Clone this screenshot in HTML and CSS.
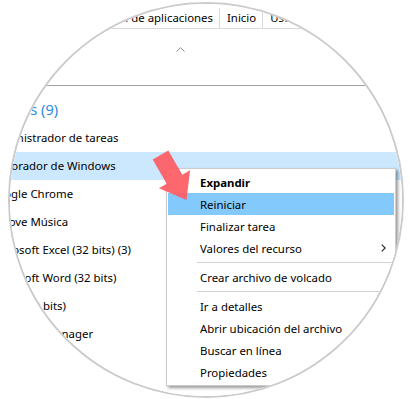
FILE: index.html
```html
<!DOCTYPE html>
<html lang="es">
<head>
<meta charset="utf-8">
<title>Administrador de tareas</title>
<link rel="stylesheet" href="styles.css">
</head>
<body>
<div class="lens">
  <div class="window">
    <div class="tabs">
      <div class="tab tab-first">Historial de aplicaciones</div>
      <div class="tab">Inicio</div>
      <div class="tab">Usuarios</div>
      <div class="tab">Detalles</div>
      <div class="tab">Servicios</div>
    </div>
    <div class="colhead">
      <svg class="sort" width="9" height="5" viewBox="0 0 9 5"><polyline points="0.5,4.5 4.5,0.8 8.5,4.5" fill="none" stroke="#8a8a8a" stroke-width="1"/></svg>
    </div>
    <div class="group">Aplicaciones (9)</div>
    <div class="rows">
      <div class="row">Administrador de tareas</div>
      <div class="row sel">Explorador de Windows</div>
      <div class="row">Google Chrome</div>
      <div class="row">Groove Música</div>
      <div class="row">Microsoft Excel (32 bits) (3)</div>
      <div class="row">Microsoft Word (32 bits)</div>
      <div class="row">Skype (32 bits)</div>
      <div class="row">Bluetooth Manager</div>
    </div>

    <div class="menu">
      <div class="item"><b>Expandir</b></div>
      <div class="item hi">Reiniciar</div>
      <div class="item">Finalizar tarea</div>
      <div class="item">Valores del recurso<svg class="sub" width="5" height="8" viewBox="0 0 5 8"><polyline points="0.7,0.6 4.2,4 0.7,7.4" fill="none" stroke="#222" stroke-width="1.1"/></svg></div>
      <div class="sep"></div>
      <div class="item">Crear archivo de volcado</div>
      <div class="sep"></div>
      <div class="item">Ir a detalles</div>
      <div class="item">Abrir ubicación del archivo</div>
      <div class="item">Buscar en línea</div>
      <div class="item">Propiedades</div>
    </div>

    <svg class="pointer" width="45" height="56" viewBox="0 0 45 56">
      <polygon points="2.7,11.5 18.3,2.5 32.3,26.7 40.1,22.2 36.5,52 8.9,40.2 16.7,35.7" fill="#fd5c63" fill-opacity="0.93"/>
    </svg>
  </div>
</div>
</body>
</html>
```

FILE: styles.css
```css
body {
  margin: 0;
  background: #fff;
  font-family: "Noto Sans", "Open Sans", sans-serif;
  font-size: 11.4px;
  color: #000;
}

.lens {
  width: 396px;
  height: 396px;
  margin: 2px 0 0 8px;
  border: 2px solid #cbcbcb;
  border-radius: 50%;
  overflow: hidden;
  box-sizing: border-box;
}

.window {
  position: relative;
  width: 410px;
  height: 399px;
  margin: -4px 0 0 -10px;
  background: #fff;
}

.tabs {
  display: flex;
  align-items: flex-end;
  height: 28px;
  border-bottom: 1px solid #d9d9d9;
}

.tab {
  flex: none;
  height: 20px;
  line-height: 20px;
  padding: 0 6px 0 7px;
  border-left: 1px solid #d9d9d9;
  white-space: nowrap;
}

.tab-first {
  width: 219px;
  box-sizing: border-box;
  text-align: right;
  padding: 0 6px 0 0;
  border-left: 0;
  overflow: hidden;
}

.colhead {
  height: 57px;
  box-sizing: border-box;
  border-bottom: 1px solid #a0a0a0;
  padding: 18px 0 0 176px;
}

.sort {
  display: block;
}

.group {
  margin: 8px 0 0 -47px;
  height: 30px;
  line-height: 30px;
  font-size: 14.5px;
  color: #2a8be0;
  white-space: nowrap;
}

.rows {
  margin-left: -11px;
}

.row {
  height: 28px;
  line-height: 28px;
  white-space: nowrap;
}

.row.sel {
  background: #cce8ff;
}

.menu {
  position: absolute;
  left: 166px;
  top: 168px;
  width: 230px;
  box-sizing: border-box;
  border: 1px solid #cccccc;
  background: #fff;
  padding: 2px 1px;
  box-shadow: 2px 2px 3px rgba(0, 0, 0, 0.4);
}

.item {
  display: flex;
  align-items: center;
  height: 22px;
  padding-left: 32px;
  white-space: nowrap;
}

.item b {
  font-weight: 700;
}

.item.hi {
  background: #83c9fb;
}

.sub {
  margin-left: auto;
  margin-right: 8px;
}

.sep {
  height: 1px;
  background: #d2d2d2;
  margin: 3px 2px 3px 29px;
}

.pointer {
  position: absolute;
  left: 150px;
  top: 148px;
}
```
